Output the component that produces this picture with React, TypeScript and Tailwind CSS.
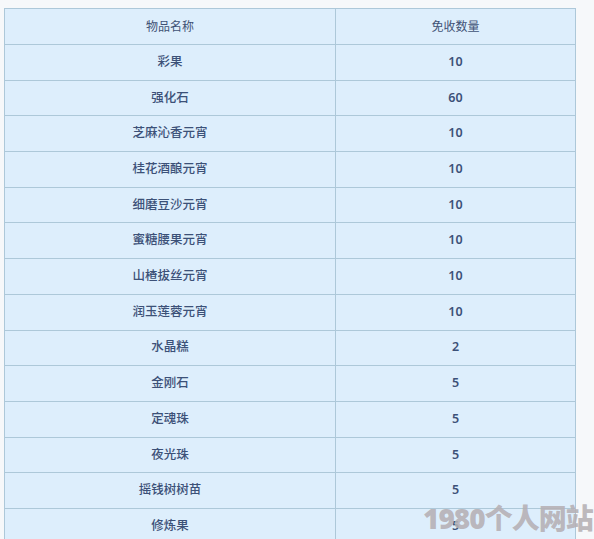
/**
 * 免收物品表：物品名称 + 免收数量
 */
const ROWS: ReadonlyArray<{ name: string; count: string }> = [
  { name: '彩果', count: '10' },
  { name: '强化石', count: '60' },
  { name: '芝麻沁香元宵', count: '10' },
  { name: '桂花酒酿元宵', count: '10' },
  { name: '细磨豆沙元宵', count: '10' },
  { name: '蜜糖腰果元宵', count: '10' },
  { name: '山楂拔丝元宵', count: '10' },
  { name: '润玉莲蓉元宵', count: '10' },
  { name: '水晶糕', count: '2' },
  { name: '金刚石', count: '5' },
  { name: '定魂珠', count: '5' },
  { name: '夜光珠', count: '5' },
  { name: '摇钱树树苗', count: '5' },
  { name: '修炼果', count: '5' },
];

const fontCls = "font-['Noto_Sans','Noto_Sans_CJK_SC',sans-serif]";

export default function App() {
  return (
    <div className={`relative h-[539px] w-[594px] overflow-hidden bg-[#f6f8fa] ${fontCls}`}>
      <div className="pl-[4px] pt-[8px]">
        <div className="w-[572px] border-l border-r border-t border-[#adc8d9] bg-[#ddeefc]">
          {/* 表头 */}
          <div className="grid h-[36px] grid-cols-[331px_1fr] border-b border-[#adc8d9] text-[12px] text-[#3f5275]">
            <div className="flex items-center justify-center border-r border-[#adc8d9]">物品名称</div>
            <div className="flex items-center justify-center">免收数量</div>
          </div>
          {/* 数据行 */}
          {ROWS.map((row) => (
            <div
              key={row.name}
              className="grid h-[35.7px] grid-cols-[331px_1fr] border-b border-[#adc8d9] text-[12.5px] font-medium text-[#3c5178]"
            >
              <div className="flex items-center justify-center border-r border-[#adc8d9]">{row.name}</div>
              <div className="flex items-center justify-center font-semibold">{row.count}</div>
            </div>
          ))}
        </div>
      </div>

      {/* 水印 */}
      <div className="absolute left-[423px] top-[500px] whitespace-nowrap text-[28px] font-black leading-[36px] tracking-[-1px] text-[#b5b0b4]/90">
        1980个人网站
      </div>
    </div>
  );
}
